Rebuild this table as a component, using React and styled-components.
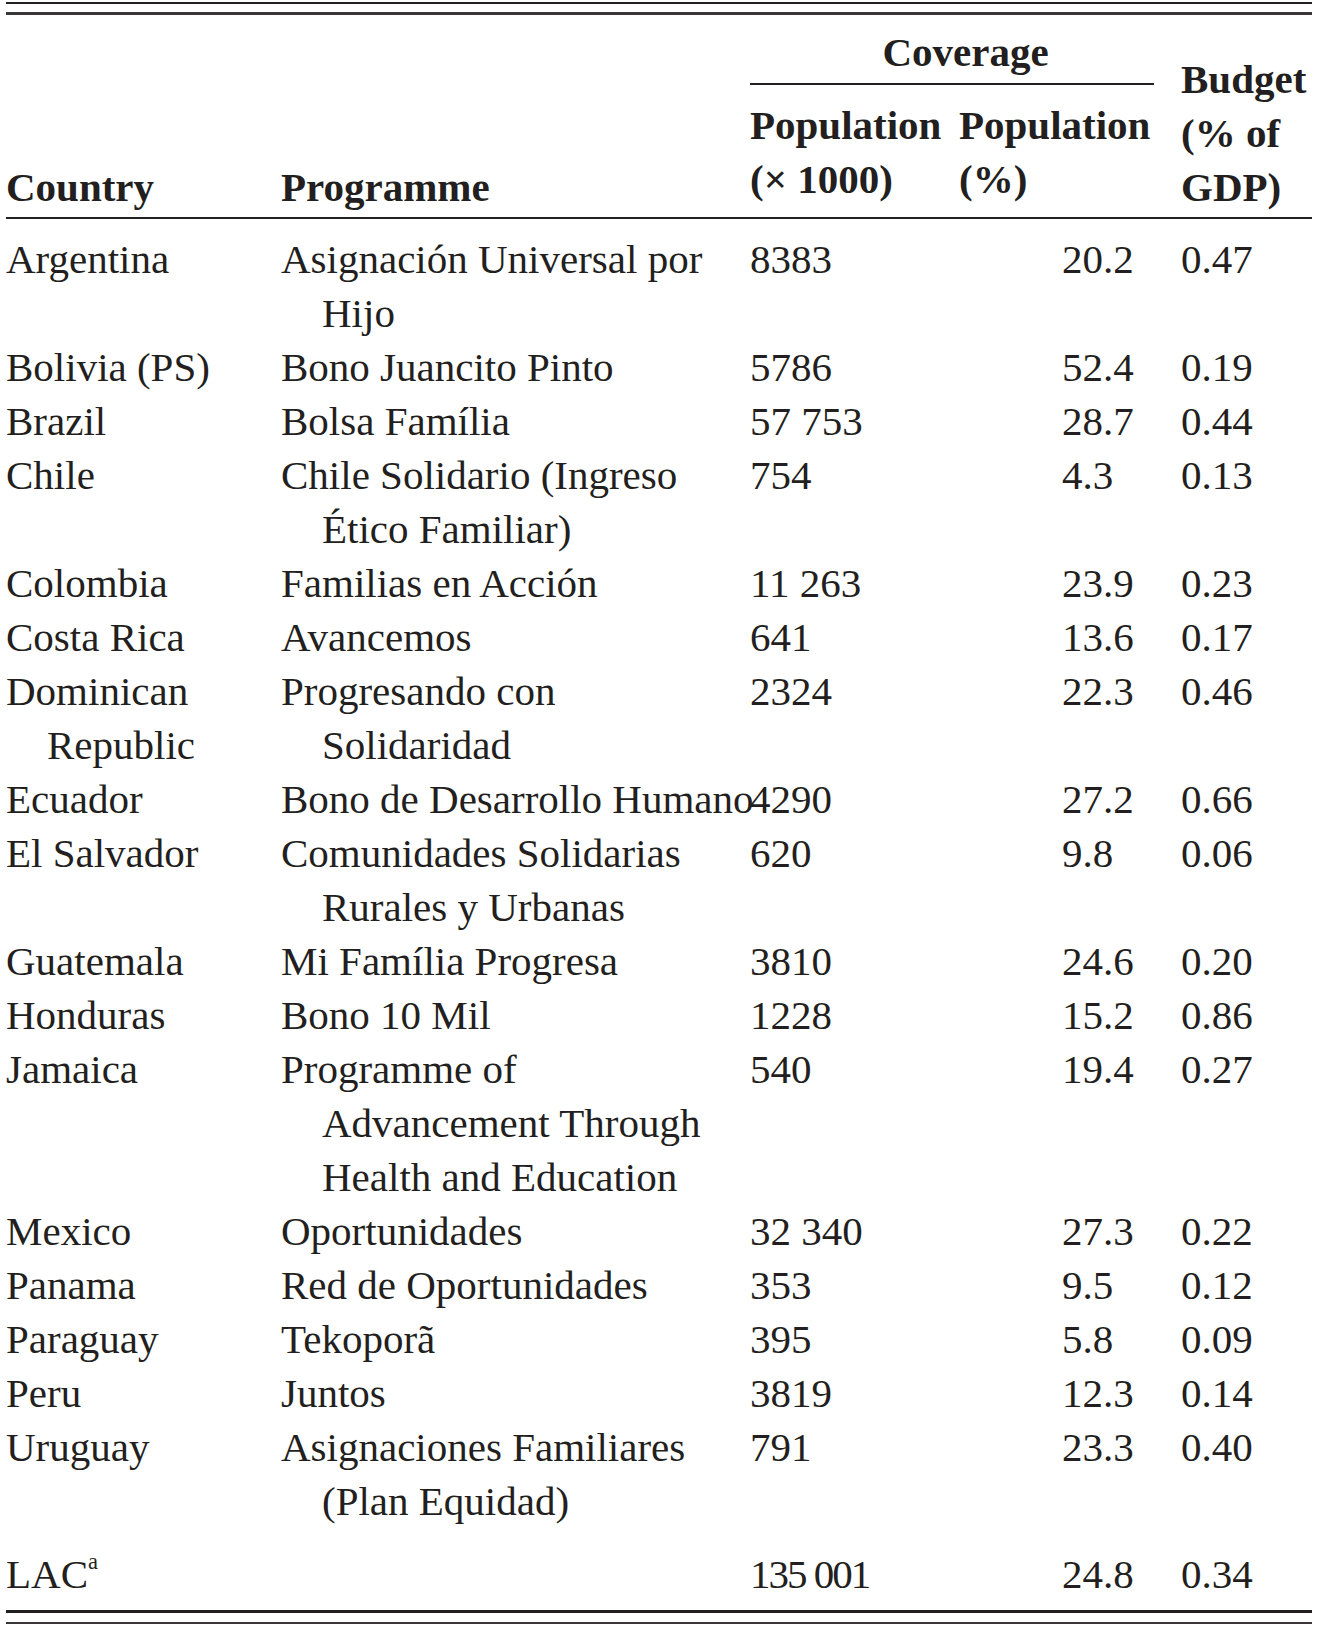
import React from 'react';
import styled, { createGlobalStyle } from 'styled-components';

const GlobalStyle = createGlobalStyle`
  html,
  body {
    margin: 0;
    padding: 0;
    background: #fff;
  }
  body {
    font-family: 'Liberation Serif', 'Times New Roman', serif;
    color: #231f20;
  }
`;

const Page = styled.div`
  padding: 2px 5px 0 6px;
  width: 1306px;
`;

const TopRule = styled.div`
  border-top: 2px solid #231f20;
  padding-top: 8px;
`;

const BottomRule = styled.div`
  border-top: 2px solid #3a3536;
  margin-top: 9px;
`;

const Table = styled.table`
  width: 1306px;
  table-layout: fixed;
  border-collapse: separate;
  border-spacing: 0;
  border-top: 3px solid #3a3536;
  font-size: 41px;
  line-height: 54px;
`;

const HeadCell = styled.th`
  font-weight: bold;
  text-align: ${({ $center }) => ($center ? 'center' : 'left')};
  vertical-align: ${({ $top }) => ($top ? 'top' : 'bottom')};
  padding: ${({ $pad }) => $pad || '0 0 3px 0'};
  border-bottom: ${({ $group }) => ($group ? 'none' : '2px solid #231f20')};
  white-space: nowrap;
`;

const GroupRule = styled.div`
  margin: 4px 27px 0 0;
  border-top: 2px solid #231f20;
`;

const Cell = styled.td`
  vertical-align: top;
  padding: ${({ $first, $total }) =>
    $total ? '19px 0 9px 0' : $first ? '13px 0 0 0' : '0'};
  padding-left: ${({ $offset }) => $offset || '0'};
  border-bottom: ${({ $total }) => ($total ? '3px solid #231f20' : 'none')};
  white-space: nowrap;
  letter-spacing: ${({ $tight }) => ($tight ? '-2px' : 'normal')};
`;

const Line = styled.div`
  padding-left: ${({ $indent }) => ($indent ? '1em' : '0')};
`;

const Sup = styled.sup`
  font-size: 0.55em;
  line-height: 0;
  vertical-align: 0.85em;
`;

const rows = [
  { country: ['Argentina'], programme: ['Asignación Universal por', 'Hijo'], pop: '8383', pct: '20.2', budget: '0.47' },
  { country: ['Bolivia (PS)'], programme: ['Bono Juancito Pinto'], pop: '5786', pct: '52.4', budget: '0.19' },
  { country: ['Brazil'], programme: ['Bolsa Família'], pop: '57 753', pct: '28.7', budget: '0.44' },
  { country: ['Chile'], programme: ['Chile Solidario (Ingreso', 'Ético Familiar)'], pop: '754', pct: '4.3', budget: '0.13' },
  { country: ['Colombia'], programme: ['Familias en Acción'], pop: '11 263', pct: '23.9', budget: '0.23' },
  { country: ['Costa Rica'], programme: ['Avancemos'], pop: '641', pct: '13.6', budget: '0.17' },
  { country: ['Dominican', 'Republic'], programme: ['Progresando con', 'Solidaridad'], pop: '2324', pct: '22.3', budget: '0.46' },
  { country: ['Ecuador'], programme: ['Bono de Desarrollo Humano'], pop: '4290', pct: '27.2', budget: '0.66' },
  { country: ['El Salvador'], programme: ['Comunidades Solidarias', 'Rurales y Urbanas'], pop: '620', pct: '9.8', budget: '0.06' },
  { country: ['Guatemala'], programme: ['Mi Família Progresa'], pop: '3810', pct: '24.6', budget: '0.20' },
  { country: ['Honduras'], programme: ['Bono 10 Mil'], pop: '1228', pct: '15.2', budget: '0.86' },
  { country: ['Jamaica'], programme: ['Programme of', 'Advancement Through', 'Health and Education'], pop: '540', pct: '19.4', budget: '0.27' },
  { country: ['Mexico'], programme: ['Oportunidades'], pop: '32 340', pct: '27.3', budget: '0.22' },
  { country: ['Panama'], programme: ['Red de Oportunidades'], pop: '353', pct: '9.5', budget: '0.12' },
  { country: ['Paraguay'], programme: ['Tekoporã'], pop: '395', pct: '5.8', budget: '0.09' },
  { country: ['Peru'], programme: ['Juntos'], pop: '3819', pct: '12.3', budget: '0.14' },
  { country: ['Uruguay'], programme: ['Asignaciones Familiares', '(Plan Equidad)'], pop: '791', pct: '23.3', budget: '0.40' },
];

// body cells: first line flush, continuation lines hang by 1em; header lines stay flush
const Lines = ({ lines, flush }) =>
  lines.map((text, i) => (
    <Line key={text} $indent={!flush && i > 0}>
      {text}
    </Line>
  ));

const App = () => (
  <>
    <GlobalStyle />
    <Page>
      <TopRule>
        <Table>
          <colgroup>
            <col style={{ width: 275 }} />
            <col style={{ width: 469 }} />
            <col style={{ width: 209 }} />
            <col style={{ width: 222 }} />
            <col style={{ width: 131 }} />
          </colgroup>
          <thead>
            <tr>
              <HeadCell rowSpan={2}>Country</HeadCell>
              <HeadCell rowSpan={2}>Programme</HeadCell>
              <HeadCell colSpan={2} $group $top $center $pad="10px 0 0 0">
                Coverage
                <GroupRule />
              </HeadCell>
              <HeadCell rowSpan={2}>
                <Lines flush lines={['Budget', '(% of', 'GDP)']} />
              </HeadCell>
            </tr>
            <tr>
              <HeadCell $pad="13px 0 11px 0">
                <Lines flush lines={['Population', '(× 1000)']} />
              </HeadCell>
              <HeadCell $pad="13px 0 11px 0">
                <Lines flush lines={['Population', '(%)']} />
              </HeadCell>
            </tr>
          </thead>
          <tbody>
            {rows.map((row, i) => (
              <tr key={row.country[0]}>
                <Cell $first={i === 0}>
                  <Lines lines={row.country} />
                </Cell>
                <Cell $first={i === 0}>
                  <Lines lines={row.programme} />
                </Cell>
                <Cell $first={i === 0}>{row.pop}</Cell>
                <Cell $first={i === 0} $offset="103px">
                  {row.pct}
                </Cell>
                <Cell $first={i === 0}>{row.budget}</Cell>
              </tr>
            ))}
            <tr>
              <Cell $total>
                LAC<Sup>a</Sup>
              </Cell>
              <Cell $total />
              <Cell $total $tight>
                135 001
              </Cell>
              <Cell $total $offset="103px">
                24.8
              </Cell>
              <Cell $total>0.34</Cell>
            </tr>
          </tbody>
        </Table>
      </TopRule>
      <BottomRule />
    </Page>
  </>
);

export default App;
